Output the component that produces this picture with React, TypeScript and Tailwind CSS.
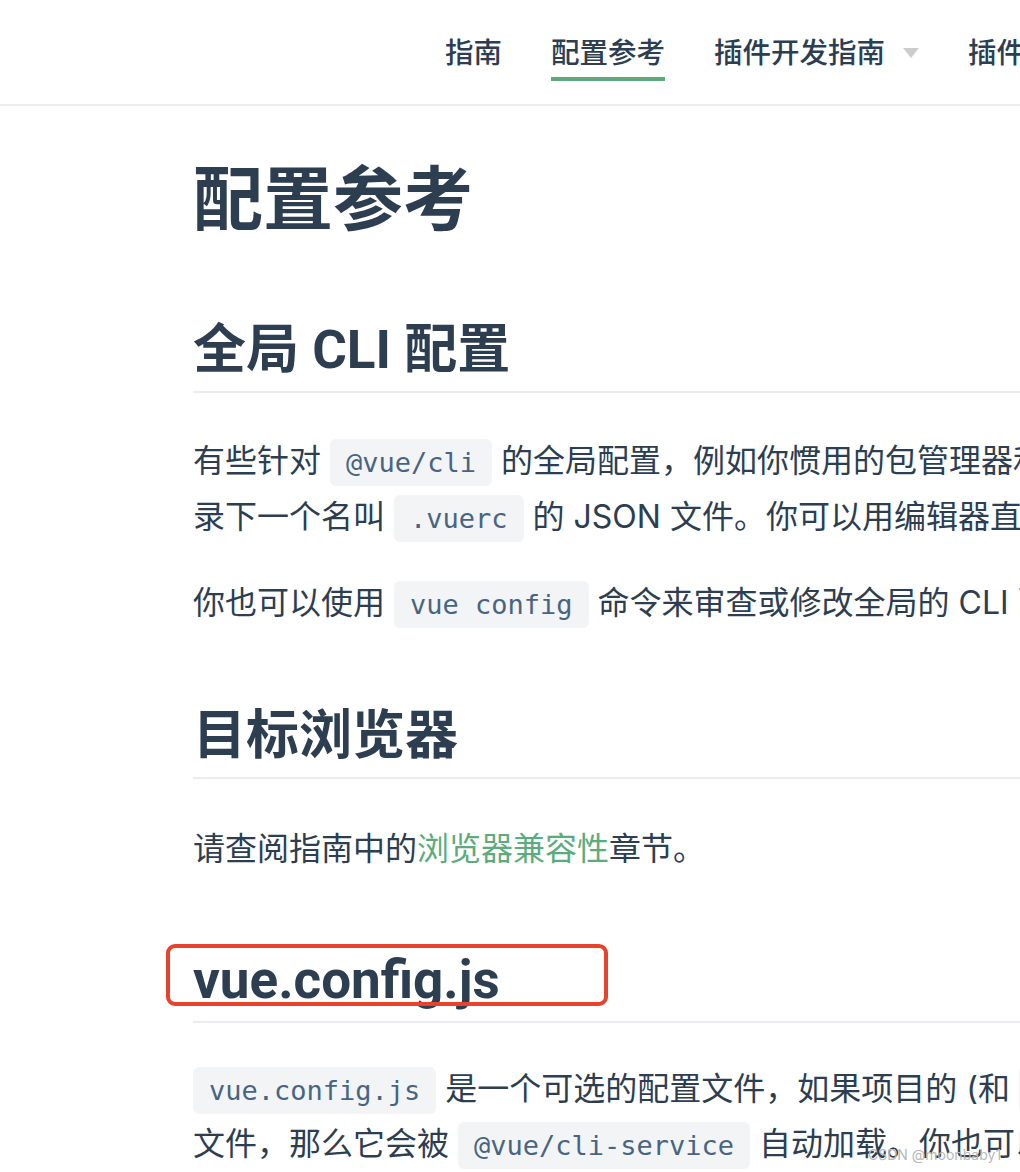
import React from 'react';

const sans = 'font-[Inter,"Noto_Sans_CJK_SC",sans-serif]';

function Code({ children }: { children: React.ReactNode }) {
    return (
        <code className="rounded-[6px] bg-[#f3f4f5] px-[16px] py-[8px] font-['DejaVu_Sans_Mono',monospace] text-[27px] leading-none text-[#476582]">
            {children}
        </code>
    );
}

function H2({ children, className = '' }: { children: React.ReactNode; className?: string }) {
    return (
        <h2
            className={`relative border-b-2 border-[#eaecef] pb-[8px] font-[Roboto,"Noto_Sans_CJK_SC",sans-serif] text-[53px] font-bold leading-[66px] ${className}`}
        >
            {children}
        </h2>
    );
}

const navItems = [
    { label: '指南' },
    { label: '配置参考', active: true },
    { label: '插件开发指南', dropdown: true },
    { label: '插件', dropdown: true },
];

export default function App() {
    return (
        <div className={`relative h-[1172px] w-[1020px] overflow-hidden bg-white text-[#2c3e50] ${sans}`}>
            {/* Navbar */}
            <header className="flex h-[106px] items-start border-b-2 border-[#eaecef] pl-[445px]">
                <nav className="flex gap-[49px] whitespace-nowrap pt-[33px]">
                    {navItems.map((item) => (
                        <div key={item.label} className="flex items-center gap-[18px]">
                            <span
                                className={`block text-[28.5px] font-medium leading-[40px] ${
                                    item.active ? 'border-b-4 border-[#5cab7d] pb-[4px]' : 'pb-[8px]'
                                }`}
                            >
                                {item.label}
                            </span>
                            {item.dropdown && (
                                <span className="mb-[8px] block h-0 w-0 border-x-[8px] border-t-[10px] border-x-transparent border-t-[#cccccc]" />
                            )}
                        </div>
                    ))}
                </nav>
            </header>

            <main className="pl-[193px] whitespace-nowrap">
                <h1 className="mt-[50px] text-[70px] font-bold leading-[88px]">配置参考</h1>

                <H2 className="mt-[73px]">全局 CLI 配置</H2>

                <div className="mt-[40px] text-[32px] leading-[56px]">
                    <div>
                        有些针对 <Code>@vue/cli</Code> 的全局配置，例如你惯用的包管理器和你本地保存的 preset，都保存在 home 目
                    </div>
                    <div>
                        录下一个名叫 <Code>.vuerc</Code> 的 JSON 文件。你可以用编辑器直接编辑这个文件来更改已保存的选项。
                    </div>
                </div>

                <p className="mt-[30px] text-[32px] leading-[56px]">
                    你也可以使用 <Code>vue config</Code> 命令来审查或修改全局的 CLI 配置。
                </p>

                <H2 className="mt-[72px]">目标浏览器</H2>

                <p className="mt-[42px] text-[32px] leading-[56px]">
                    请查阅指南中的<a className="text-[#5cab7d]">浏览器兼容性</a>章节。
                </p>

                <H2 className="mt-[70px]">
                    vue.config.js
                    <span className="absolute left-[-27px] top-[-3px] h-[62px] w-[442px] rounded-[9px] border-[4px] border-[#e8412c]" />
                </H2>

                <div className="mt-[38px] text-[32px] leading-[55px]">
                    <div>
                        <Code>vue.config.js</Code> 是一个可选的配置文件，如果项目的 (和 <Code>package.json</Code> 同级的) 根目录中存在这个
                    </div>
                    <div>
                        文件，那么它会被 <Code>@vue/cli-service</Code> 自动加载。你也可以使用 <Code>package.json</Code> 中的 <Code>vue</Code> 字段
                    </div>
                </div>
            </main>

            {/* watermark */}
            <span className="absolute left-[868px] top-[1146px] text-[14px] leading-[18px] text-[#b8b8b8]">CSDN @moonbaby1</span>
        </div>
    );
}
